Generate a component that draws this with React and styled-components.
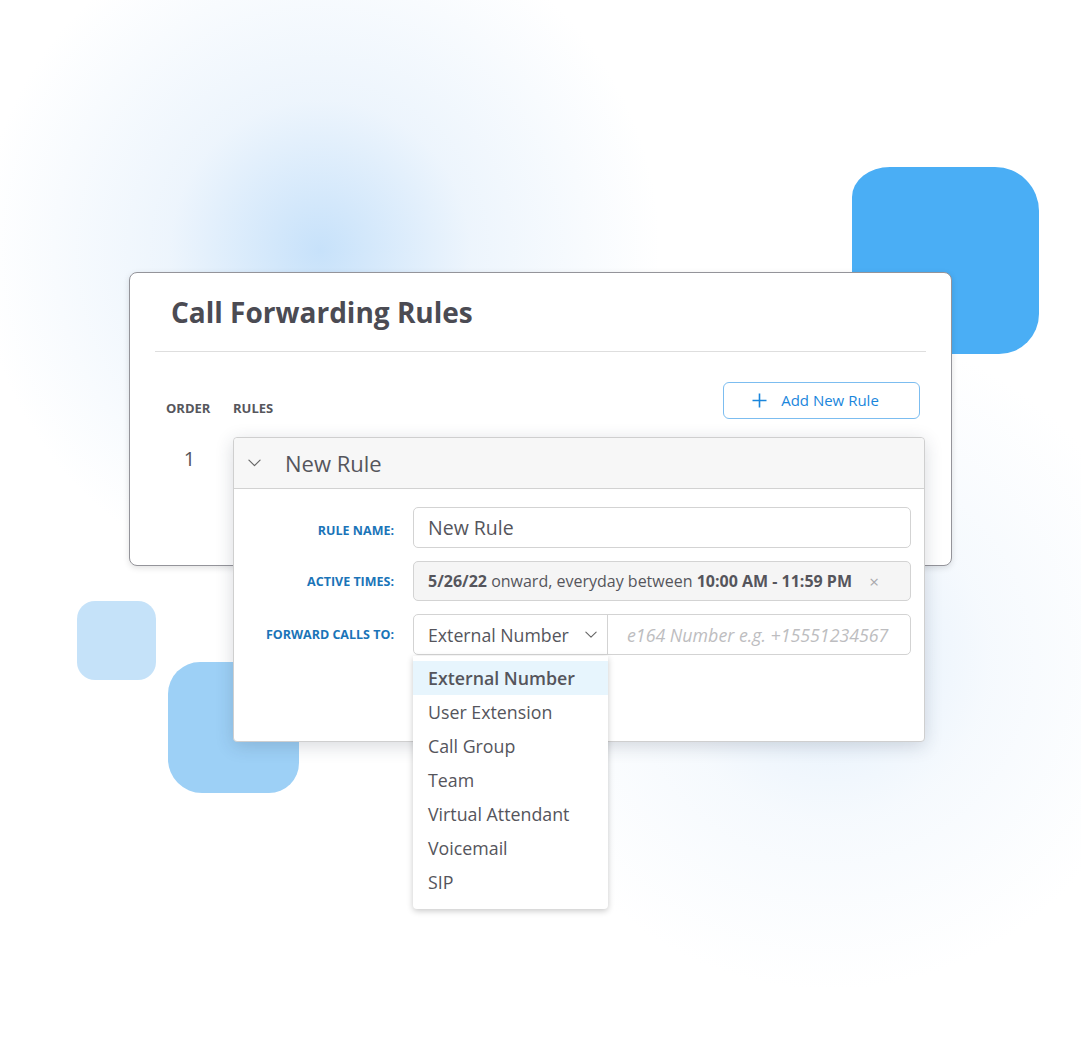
import React from "react"
import styled, { createGlobalStyle } from "styled-components"

const GlobalStyle = createGlobalStyle`
  html, body {
    margin: 0;
    padding: 0;
    background: #ffffff;
  }
  body {
    font-family: "Open Sans", "Noto Sans", Arial, sans-serif;
    color: #55555c;
  }
`

const Stage = styled.div`
  position: relative;
  width: 1081px;
  height: 1038px;
  overflow: hidden;
  background:
    radial-gradient(circle at 320px 250px, rgba(196, 224, 250, 0.95) 0, rgba(225, 238, 251, 0.6) 150px, rgba(255, 255, 255, 0) 340px),
    radial-gradient(circle at 830px 660px, rgba(214, 232, 250, 0.7) 0, rgba(236, 244, 252, 0.5) 160px, rgba(255, 255, 255, 0) 330px),
    #ffffff;
  padding: 272px 0 0 129px;
  box-sizing: border-box;
`

const Blob = styled.div`
  position: absolute;
  left: ${(p) => p.x}px;
  top: ${(p) => p.y}px;
  width: ${(p) => p.size}px;
  height: ${(p) => p.size}px;
  background: ${(p) => p.color};
  border-radius: ${(p) => p.radius};
`

const Card = styled.div`
  position: relative;
  width: 823px;
  height: 294px;
  box-sizing: border-box;
  background: #fff;
  border: 1px solid #94949a;
  border-radius: 8px;
  box-shadow: 0 2px 6px rgba(0, 0, 0, 0.12);
  padding: 0 25px;
`

const CardHeader = styled.div`
  height: 78px;
  display: flex;
  align-items: center;
  padding-left: 16px;
  border-bottom: 1px solid #dedede;
`

const Title = styled.h1`
  margin: 0;
  font-size: 28px;
  font-weight: 700;
  color: #4b4b53;
`

const ColumnsRow = styled.div`
  display: flex;
  align-items: center;
  margin-top: 29px;
  height: 38px;
`

const ColLabel = styled.span`
  box-sizing: border-box;
  font-size: 13px;
  font-weight: 700;
  color: #56565c;
  width: ${(p) => p.width || "auto"};
  padding-left: ${(p) => p.pad || 0}px;
  margin-top: 15px;
`

const AddButton = styled.button`
  margin-left: auto;
  margin-right: 6px;
  width: 197px;
  height: 37px;
  display: flex;
  align-items: center;
  justify-content: center;
  gap: 14px;
  background: #fff;
  border: 1px solid #7cbdf0;
  border-radius: 6px;
  color: #1a86dc;
  font-family: inherit;
  font-size: 15px;
  padding: 0 12px 0 0;
`

const RuleRow = styled.div`
  display: flex;
  margin-top: 18px;
`

const OrderCell = styled.div`
  width: 78px;
  padding-left: 11px;
  box-sizing: border-box;
`

const OrderNum = styled.div`
  width: 47px;
  text-align: center;
  font-size: 20px;
  color: #55555c;
  padding-top: 8px;
`

const Panel = styled.div`
  position: relative;
  width: 692px;
  height: 305px;
  box-sizing: border-box;
  background: #fff;
  border: 1px solid #cfcfcf;
  border-radius: 4px;
  box-shadow: 0 4px 18px rgba(40, 50, 70, 0.18);
`

const PanelHeader = styled.div`
  height: 50px;
  display: flex;
  align-items: center;
  background: #f7f7f7;
  border-bottom: 1px solid #d2d2d2;
  border-radius: 4px 4px 0 0;
  padding-left: 14px;
  gap: 24px;
`

const PanelTitle = styled.span`
  font-size: 22px;
  color: #55555c;
`

const Form = styled.div`
  display: grid;
  grid-template-columns: 160px 498px;
  column-gap: 19px;
  row-gap: 13px;
  padding-top: 18px;
  align-items: center;
`

const Label = styled.label`
  text-align: right;
  font-size: 12.5px;
  font-weight: 700;
  color: #1a74b8;
  padding-top: ${(p) => p.offset || 0}px;
`

const Field = styled.div`
  position: relative;
  height: ${(p) => p.h || 41}px;
  box-sizing: border-box;
  border: 1px solid #d3d3d3;
  border-radius: 5px;
  background: ${(p) => (p.muted ? "#f5f5f5" : "#fff")};
  display: flex;
  align-items: center;
`

const FieldText = styled.span`
  padding-left: 14px;
  font-size: ${(p) => p.size || 18}px;
  color: #55555c;
  white-space: nowrap;
  b {
    font-weight: 700;
  }
`

const Clear = styled.span`
  margin-left: auto;
  margin-right: 31px;
  font-size: 17px;
  color: #a9a9ad;
`

const SelectPart = styled.div`
  width: 194px;
  height: 100%;
  box-sizing: border-box;
  border-right: 1px solid #d3d3d3;
  display: flex;
  align-items: center;
  justify-content: space-between;
  padding: 0 10px 0 14px;
  font-size: 17.7px;
  color: #55555c;
  white-space: nowrap;
`

const Placeholder = styled.span`
  padding-left: 19px;
  font-size: 17.8px;
  font-style: italic;
  color: #bdbdc0;
  white-space: nowrap;
`

const Menu = styled.ul`
  position: absolute;
  left: -1px;
  top: 41px;
  width: 195px;
  margin: 0;
  padding: 5px 0 10px;
  list-style: none;
  background: #fff;
  border-radius: 0 0 4px 4px;
  box-shadow: 0 2px 6px rgba(0, 0, 0, 0.22);
  z-index: 5;
`

const MenuItem = styled.li`
  height: 34px;
  display: flex;
  align-items: center;
  padding-left: 15px;
  font-size: 17.8px;
  color: #55555c;
  white-space: nowrap;
  font-weight: ${(p) => (p.active ? 600 : 400)};
  background: ${(p) => (p.active ? "#e7f5fd" : "transparent")};
`

const Chevron = ({ size = 14 }) => (
  <svg width={size} height={size * 0.6} viewBox="0 0 14 8" fill="none">
    <path d="M1 1l6 6 6-6" stroke="#666" strokeWidth="1.3" strokeLinecap="round" strokeLinejoin="round" />
  </svg>
)

const Plus = () => (
  <svg width="15" height="15" viewBox="0 0 15 15" fill="none">
    <path d="M7.5 0.5v14M0.5 7.5h14" stroke="#1a86dc" strokeWidth="1.6" />
  </svg>
)

const options = [
  "External Number",
  "User Extension",
  "Call Group",
  "Team",
  "Virtual Attendant",
  "Voicemail",
  "SIP",
]

const App = () => {
  return (
    <Stage>
      <GlobalStyle />
      <Blob x={852} y={167} size={187} color="#4aaef5" radius="38px 44px 40px 36px / 30px 44px 40px 36px" />
      <Blob x={77} y={601} size={79} color="#c5e2f9" radius="18px" />
      <Blob x={168} y={662} size={131} color="#9dd0f6" radius="32px 30px 30px 34px" />
      <Card>
        <CardHeader>
          <Title>Call Forwarding Rules</Title>
        </CardHeader>
        <ColumnsRow>
          <ColLabel width="78px" pad={11}>ORDER</ColLabel>
          <ColLabel>RULES</ColLabel>
          <AddButton>
            <Plus />
            Add New Rule
          </AddButton>
        </ColumnsRow>
        <RuleRow>
          <OrderCell>
            <OrderNum>1</OrderNum>
          </OrderCell>
          <Panel>
            <PanelHeader>
              <Chevron size={13} />
              <PanelTitle>New Rule</PanelTitle>
            </PanelHeader>
            <Form>
              <Label offset={5}>RULE NAME:</Label>
              <Field>
                <FieldText size={19.5}>New Rule</FieldText>
              </Field>
              <Label>ACTIVE TIMES:</Label>
              <Field muted h={40}>
                <FieldText size={16}>
                  <b>5/26/22</b> onward, everyday between <b>10:00 AM - 11:59 PM</b>
                </FieldText>
                <Clear>×</Clear>
              </Field>
              <Label offset={-2}>FORWARD CALLS TO:</Label>
              <Field>
                <SelectPart>
                  External Number
                  <Chevron size={12} />
                </SelectPart>
                <Placeholder>e164 Number e.g. +15551234567</Placeholder>
                <Menu>
                  {options.map((o, i) => (
                    <MenuItem key={o} active={i === 0}>
                      {o}
                    </MenuItem>
                  ))}
                </Menu>
              </Field>
            </Form>
          </Panel>
        </RuleRow>
      </Card>
    </Stage>
  )
}

export default App
